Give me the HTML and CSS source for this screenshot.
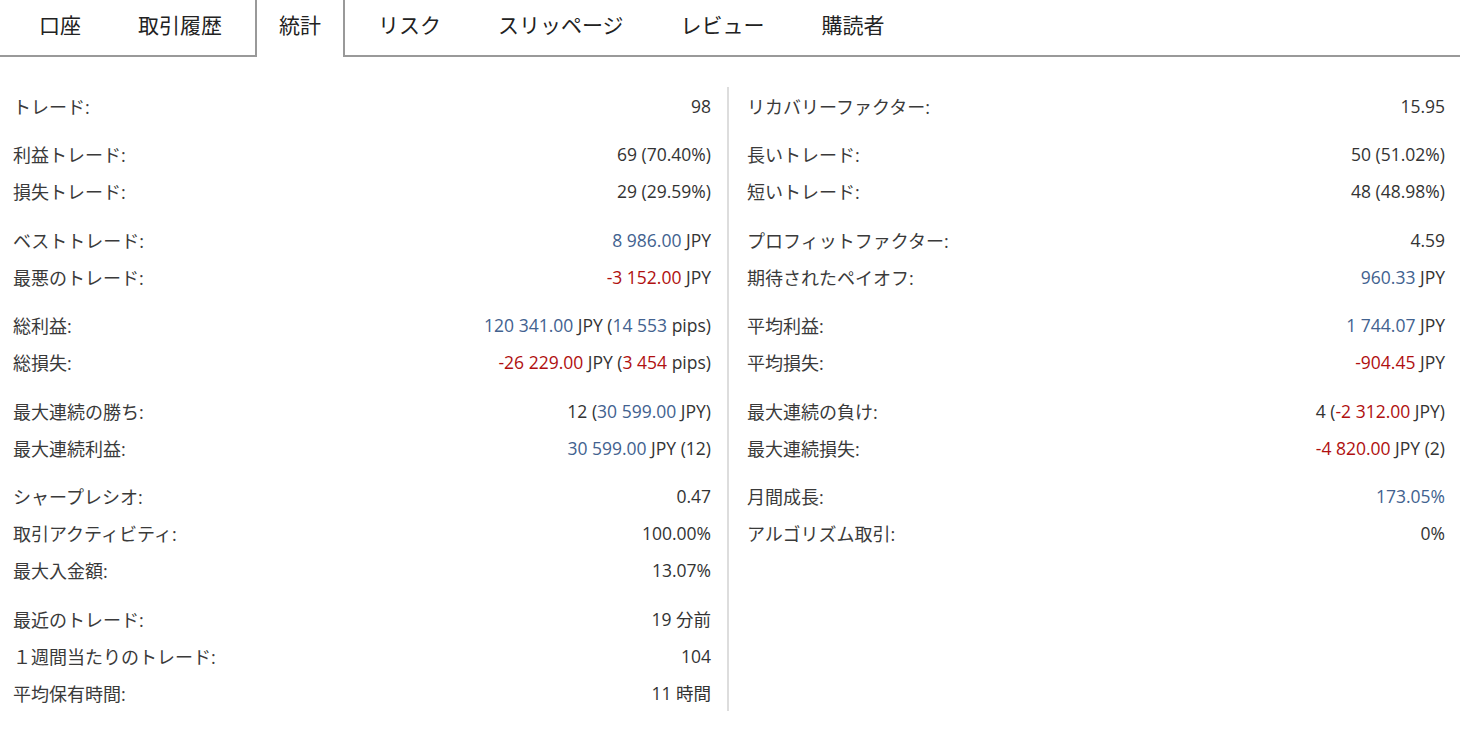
FILE: index.html
```html
<!DOCTYPE html>
<html lang="ja">
<head>
    <meta charset="UTF-8">
    <meta name="viewport" content="width=device-width, initial-scale=1.0">
    <title>統計</title>
    <link rel="stylesheet" href="styles.css">
</head>
<body>
    <ul class="tabs">
        <li class="tab">口座</li>
        <li class="tab">取引履歴</li>
        <li class="tab active">統計</li>
        <li class="tab">リスク</li>
        <li class="tab">スリッページ</li>
        <li class="tab">レビュー</li>
        <li class="tab">購読者</li>
    </ul>

    <div class="stats">
        <div class="col col-left">
            <div class="group">
                <div class="row"><span class="label">トレード:</span><span class="value">98</span></div>
            </div>
            <div class="group">
                <div class="row"><span class="label">利益トレード:</span><span class="value">69 (70.40%)</span></div>
                <div class="row"><span class="label">損失トレード:</span><span class="value">29 (29.59%)</span></div>
            </div>
            <div class="group">
                <div class="row"><span class="label">ベストトレード:</span><span class="value"><span class="pos">8 986.00</span> JPY</span></div>
                <div class="row"><span class="label">最悪のトレード:</span><span class="value"><span class="neg">-3 152.00</span> JPY</span></div>
            </div>
            <div class="group">
                <div class="row"><span class="label">総利益:</span><span class="value"><span class="pos">120 341.00</span> JPY (<span class="pos">14 553</span> pips)</span></div>
                <div class="row"><span class="label">総損失:</span><span class="value"><span class="neg">-26 229.00</span> JPY (<span class="neg">3 454</span> pips)</span></div>
            </div>
            <div class="group">
                <div class="row"><span class="label">最大連続の勝ち:</span><span class="value">12 (<span class="pos">30 599.00</span> JPY)</span></div>
                <div class="row"><span class="label">最大連続利益:</span><span class="value"><span class="pos">30 599.00</span> JPY (12)</span></div>
            </div>
            <div class="group">
                <div class="row"><span class="label">シャープレシオ:</span><span class="value">0.47</span></div>
                <div class="row"><span class="label">取引アクティビティ:</span><span class="value">100.00%</span></div>
                <div class="row"><span class="label">最大入金額:</span><span class="value">13.07%</span></div>
            </div>
            <div class="group">
                <div class="row"><span class="label">最近のトレード:</span><span class="value">19 分前</span></div>
                <div class="row"><span class="label">１週間当たりのトレード:</span><span class="value">104</span></div>
                <div class="row"><span class="label">平均保有時間:</span><span class="value">11 時間</span></div>
            </div>
        </div>

        <div class="col col-right">
            <div class="group">
                <div class="row"><span class="label">リカバリーファクター:</span><span class="value">15.95</span></div>
            </div>
            <div class="group">
                <div class="row"><span class="label">長いトレード:</span><span class="value">50 (51.02%)</span></div>
                <div class="row"><span class="label">短いトレード:</span><span class="value">48 (48.98%)</span></div>
            </div>
            <div class="group">
                <div class="row"><span class="label">プロフィットファクター:</span><span class="value">4.59</span></div>
                <div class="row"><span class="label">期待されたペイオフ:</span><span class="value"><span class="pos">960.33</span> JPY</span></div>
            </div>
            <div class="group">
                <div class="row"><span class="label">平均利益:</span><span class="value"><span class="pos">1 744.07</span> JPY</span></div>
                <div class="row"><span class="label">平均損失:</span><span class="value"><span class="neg">-904.45</span> JPY</span></div>
            </div>
            <div class="group">
                <div class="row"><span class="label">最大連続の負け:</span><span class="value">4 (<span class="neg">-2 312.00</span> JPY)</span></div>
                <div class="row"><span class="label">最大連続損失:</span><span class="value"><span class="neg">-4 820.00</span> JPY (2)</span></div>
            </div>
            <div class="group">
                <div class="row"><span class="label">月間成長:</span><span class="value"><span class="pos">173.05%</span></span></div>
                <div class="row"><span class="label">アルゴリズム取引:</span><span class="value">0%</span></div>
            </div>
        </div>
    </div>
</body>
</html>
```

FILE: styles.css
```css
body {
    margin: 0;
    padding: 0;
    background-color: white;
    color: #333;
    font-family: "Open Sans", "Noto Sans CJK JP", sans-serif;
}
.tabs {
    list-style: none;
    margin: 0;
    padding: 0 0 0 15px;
    display: flex;
    gap: 9px;
    border-bottom: 2px solid #999;
}
.tab {
    height: 55px;
    line-height: 51px;
    padding: 0 22px;
    font-size: 21px;
    color: #222;
    border-left: 2px solid transparent;
    border-right: 2px solid transparent;
    cursor: pointer;
}
.tab.active {
    border-color: #999;
    background-color: white;
    height: 57px;
    margin-bottom: -2px;
}
.stats {
    display: flex;
    margin-top: 30px;
    padding: 0 15px 0 13px;
    font-size: 17.5px;
}
.col {
    flex: 1;
}
.col-left {
    padding-right: 16px;
    border-right: 2px solid #ddd;
}
.col-right {
    padding-left: 18px;
}
.group + .group {
    margin-top: 11.5px;
}
.row {
    height: 37px;
    display: flex;
    align-items: center;
    justify-content: space-between;
}
.label {
    font-size: 18px;
    color: #3a3a3a;
}
.value {
    color: #333;
}
.pos {
    color: #42628f;
}
.neg {
    color: #b01010;
}
```
